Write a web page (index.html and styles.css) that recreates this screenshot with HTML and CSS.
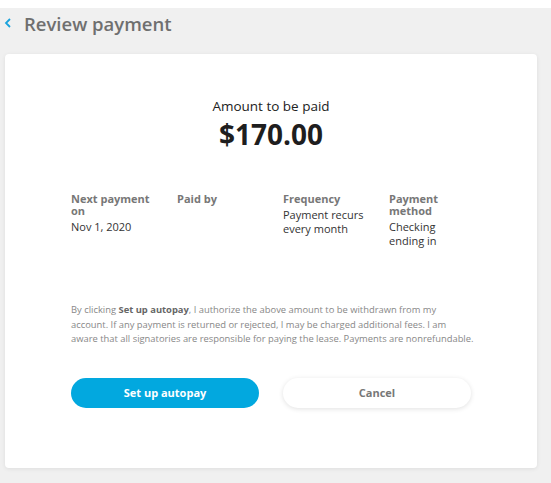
FILE: index.html
```html
<!DOCTYPE html>
<html>
<head>
<meta charset="utf-8">
<link rel="stylesheet" href="styles.css">
</head>
<body>
<div class="page">
  <header class="header">
    <svg class="back" width="8" height="10" viewBox="0 0 8 10"><path d="M6 1 L2 5 L6 9" fill="none" stroke="#1aa3dd" stroke-width="1.8"/></svg>
    <h1 class="title">Review payment</h1>
  </header>
  <main class="card">
    <div class="amount">
      <div class="amount-label">Amount to be paid</div>
      <div class="amount-value">$170.00</div>
    </div>
    <div class="details">
      <div class="detail">
        <div class="detail-label">Next payment on</div>
        <div class="detail-value">Nov 1, 2020</div>
      </div>
      <div class="detail">
        <div class="detail-label">Paid by</div>
        <div class="detail-value"></div>
      </div>
      <div class="detail">
        <div class="detail-label">Frequency</div>
        <div class="detail-value">Payment recurs every month</div>
      </div>
      <div class="detail">
        <div class="detail-label">Payment method</div>
        <div class="detail-value">Checking ending in</div>
      </div>
    </div>
    <p class="disclaimer">By clicking <b>Set up autopay</b>, I authorize the above amount to be withdrawn from my<br>account. If any payment is returned or rejected, I may be charged additional fees. I am<br>aware that all signatories are responsible for paying the lease. Payments are nonrefundable.</p>
    <div class="actions">
      <button class="btn btn-primary">Set up autopay</button>
      <button class="btn btn-secondary">Cancel</button>
    </div>
  </main>
</div>
</body>
</html>
```

FILE: styles.css
```css
html, body {
  margin: 0;
  padding: 0;
  background: #ffffff;
}
body {
  font-family: "Open Sans", "Liberation Sans", sans-serif;
}
.page {
  margin-top: 8px;
  background: #f0f0f0;
  height: 475px;
  padding: 0;
  overflow: hidden;
}
.header {
  display: flex;
  align-items: center;
  height: 30px;
  padding-left: 4px;
  gap: 12px;
}
.title {
  margin: 0;
  font-size: 18.5px;
  font-weight: 600;
  color: #6f6f6f;
}
.card {
  margin: 16px 14px 0 5px;
  background: #fff;
  border-radius: 4px;
  box-shadow: 0 1px 4px rgba(0,0,0,0.08);
  height: 414px;
  box-sizing: border-box;
  padding: 42px 66px 0 66px;
}
.amount {
  text-align: center;
}
.amount-label {
  font-size: 13.5px;
  font-weight: 500;
  color: #222;
  line-height: 20px;
}
.amount-value {
  font-size: 28px;
  font-weight: 700;
  color: #1e1e1e;
  line-height: 34px;
  margin-top: 1px;
}
.details {
  display: grid;
  grid-template-columns: repeat(4, 84px);
  column-gap: 22px;
  margin-top: 42px;
}
.detail-label {
  font-size: 11px;
  font-weight: 700;
  color: #777;
  line-height: 12px;
}
.detail-value {
  font-size: 11px;
  color: #333;
  line-height: 14px;
  margin-top: 3px;
}
.disclaimer {
  margin: 55px 0 0 0;
  font-size: 9.4px;
  line-height: 14.5px;
  color: #888;
  white-space: nowrap;
}
.disclaimer b {
  color: #666;
}
.actions {
  display: flex;
  gap: 24px;
  margin-top: 31px;
}
.btn {
  flex: 1;
  height: 30px;
  border-radius: 15px;
  border: none;
  font-family: "Open Sans", "Liberation Sans", sans-serif;
  font-size: 11px;
  font-weight: 700;
}
.btn-primary {
  background: #02a8df;
  color: #fff;
}
.btn-secondary {
  background: #fff;
  color: #777;
  box-shadow: 0 1px 5px rgba(0,0,0,0.12);
}
```
